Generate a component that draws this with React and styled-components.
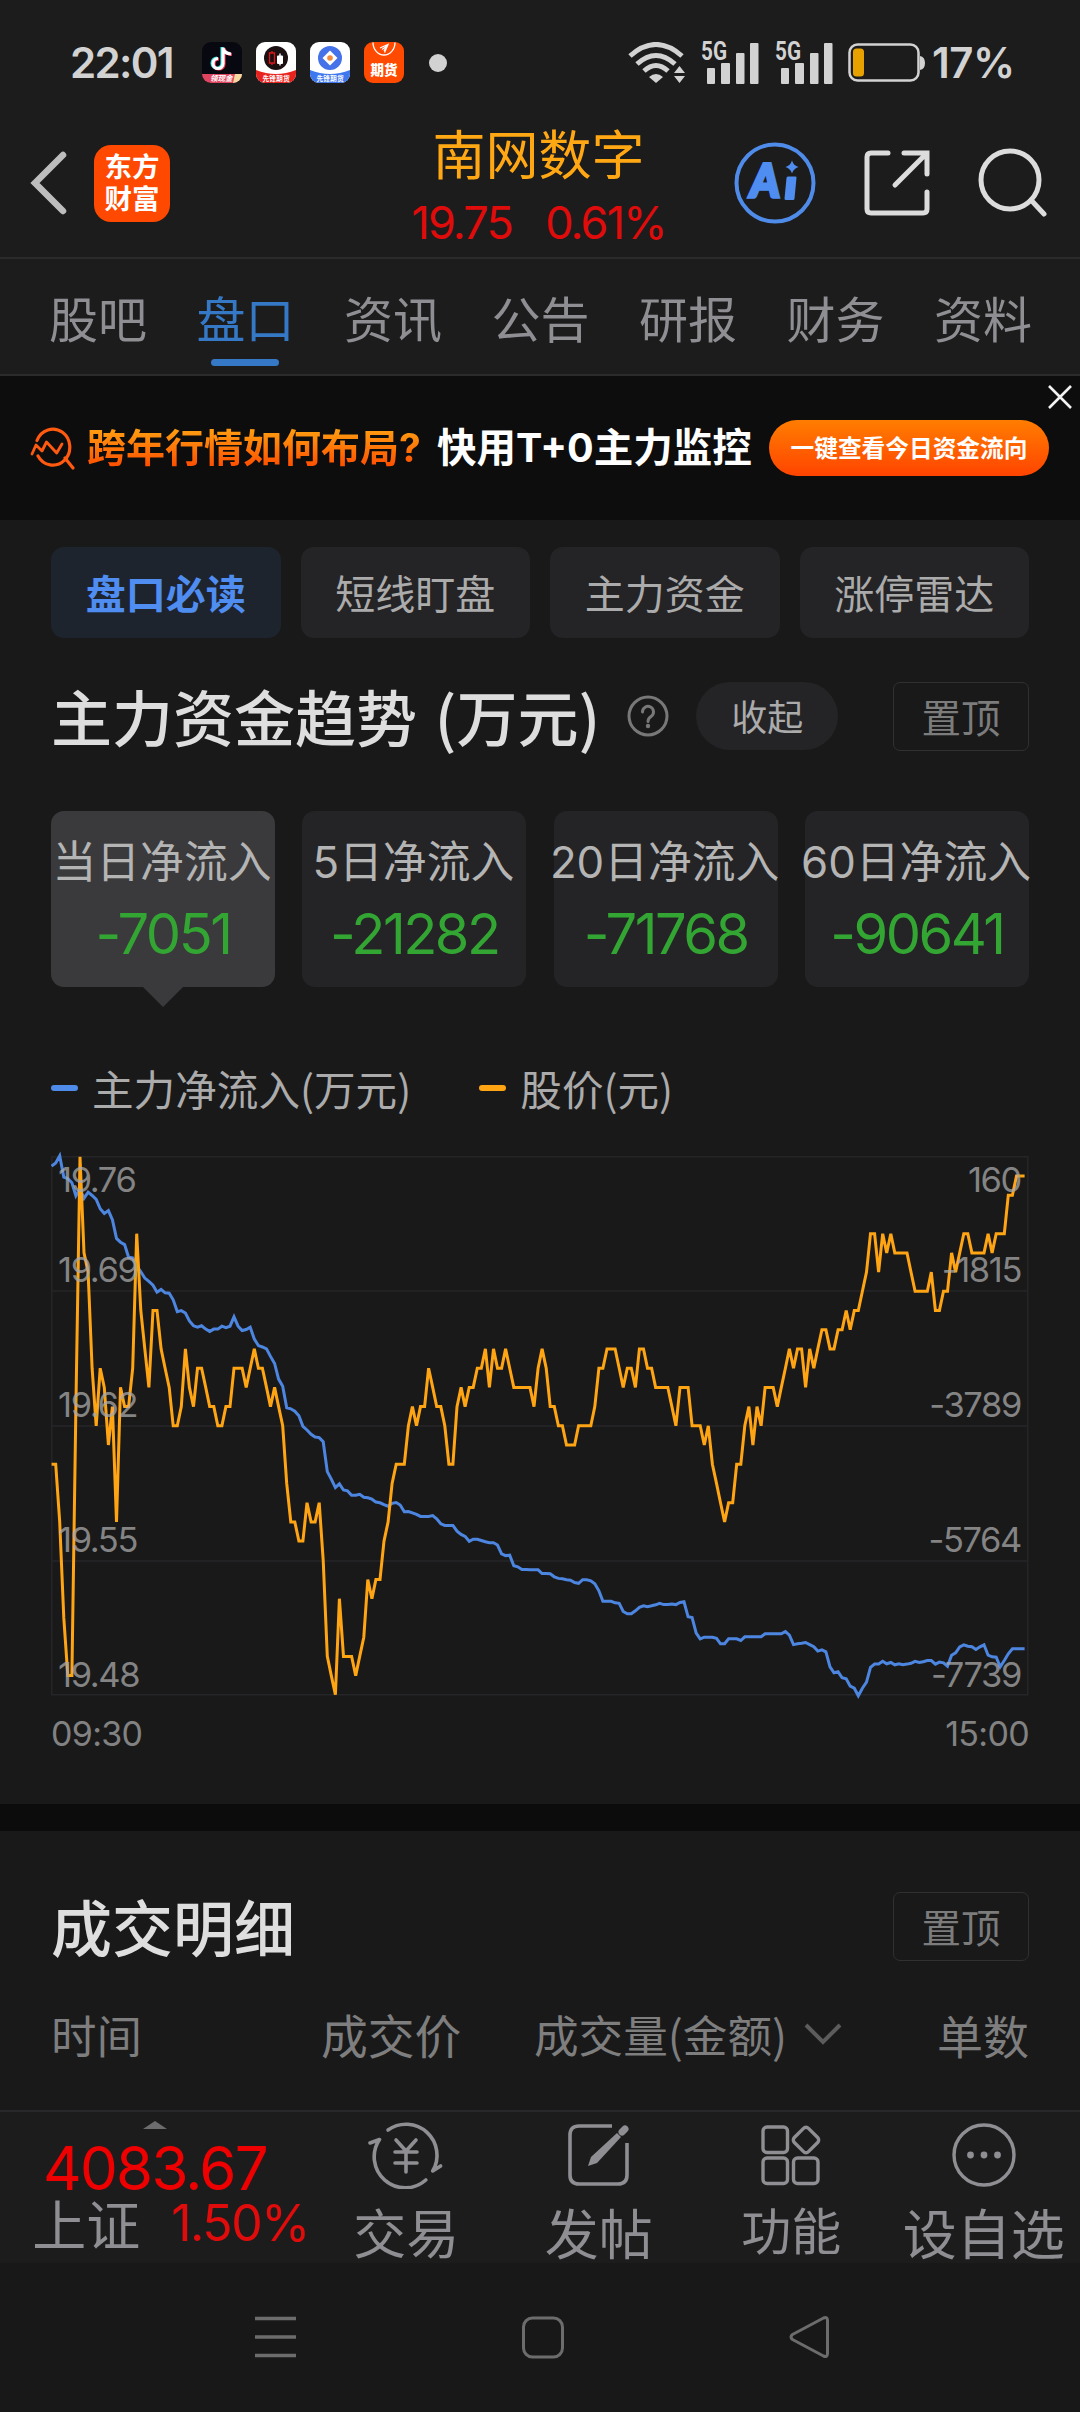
import React from 'react';
import styled, { createGlobalStyle } from 'styled-components';

const PRICE = [
  16, 16, 19, 24, 27, 27, 13, 0, 5, 6, 11, 14, 11, 12, 15, 13, 19, 12, 13, 13, 11, 4, 8, 10, 12, 8, 8, 10, 11, 12,
  14, 14, 13, 10, 12, 13, 11, 11, 12, 13, 13, 14, 14, 13, 13, 11, 11, 11, 12, 11, 10, 11, 11, 12, 13, 12, 13, 14, 17, 19,
  19, 20, 20, 18, 19, 19, 18, 21, 26, 27, 28, 23, 26, 26, 26, 27, 26, 25, 22, 23, 22, 22, 20, 19, 17, 16, 16, 16, 14, 13,
  14, 13, 13, 11, 12, 13, 13, 14, 16, 16, 13, 12, 13, 12, 12, 11, 11, 10, 12, 10, 11, 11, 10, 11, 12, 12, 12, 12, 12, 13,
  11, 10, 11, 13, 13, 14, 14, 15, 15, 15, 14, 14, 14, 14, 13, 11, 11, 10, 10, 10, 11, 12, 11, 11, 12, 10, 10, 11, 11, 12,
  12, 12, 12, 13, 14, 12, 12, 12, 14, 14, 14, 15, 14, 16, 17, 18, 19, 18, 18, 16, 16, 14, 13, 15, 13, 14, 12, 12, 12, 13,
  12, 11, 10, 11, 10, 10, 12, 10, 11, 10, 9, 9, 10, 10, 9, 9, 8, 9, 8, 8, 7, 6, 4, 4, 6, 4, 5, 4, 5, 5,
  5, 5, 6, 7, 7, 7, 7, 6, 8, 8, 7, 7, 5, 6, 5, 4, 4, 5, 5, 5, 5, 4, 5, 4, 4, 4, 2, 2, 1, 1,
  1,
];

const FLOW = [
  9.4, 6.1, -1, 20.3, 21.7, 26, 39, 32, 41.5, 35.4, 38.7, 42.5, 52, 56.6, 53.8, 62.8, 81.6, 85.4, 87.8, 100.5,
  101, 109, 115, 121.3, 124.6, 128.4, 135.4, 132.6, 136, 136.4, 143, 154.8, 153.8, 156.2, 164.2, 169, 170.4, 169, 172.3, 174.6,
  172.3, 172.3, 169.4, 170.8, 169.4, 160, 169.4, 173.7, 172.7, 170.4, 182.2, 188.8, 190.2, 192, 199.6, 206.7, 222.3, 229.4, 251, 252,
  254.4, 259, 269.5, 273.2, 277.5, 280.3, 280.8, 285, 314.8, 322.3, 330.8, 327, 333.2, 334.1, 338.4, 338.4, 337.5, 340.4, 341, 342.4,
  345.3, 346, 347.8, 349.4, 346.5, 345.7, 348.2, 355, 354.7, 356, 357.6, 359.6, 359.6, 359.6, 358.8, 362, 367, 368.6, 368.6, 368.6,
  374.3, 377.6, 379.6, 384.5, 382.4, 382.4, 383.7, 385, 386, 386, 388.2, 397, 398.8, 398.4, 409, 410, 412.6, 412.6, 413, 413,
  413, 416.7, 416.7, 417, 420, 421.6, 422, 423, 423.4, 425.7, 426.5, 422.9, 422.9, 424, 427, 434, 444.5, 444.5, 444.5, 446,
  446.5, 454.7, 457, 457, 454, 450.6, 449, 449.8, 449, 448, 446.5, 447.8, 447.8, 447.3, 447.8, 445.7, 445, 460, 460.8, 476.3,
  482, 480.4, 480.4, 480.4, 481.6, 487, 487, 482, 482, 482, 483.7, 480, 480, 480, 480, 480, 477, 477, 477, 477,
  477, 474.7, 478.4, 487.8, 487, 486.5, 485.7, 487.8, 490, 494.3, 493, 495, 510, 516, 515, 521, 522, 529.4, 531.4, 539,
  531.4, 525.3, 510.6, 507.3, 507.3, 504.5, 507, 505.7, 508, 507, 508, 507.3, 506.5, 504.5, 505.7, 505, 503.7, 503.7, 507.3, 505.3,
  506, 509.4, 498.4, 496, 490, 488, 489.4, 490, 492.7, 490, 488, 498.4, 500, 500.4, 510, 503.7, 497, 492, 492, 492,
  492,
];

const CHART_HEIGHT = 538;
const STEP_X = 4.054;
const STEP_Y = CHART_HEIGHT / 28;

const toPoints = (values, scale) =>
  values.map((v, i) => `${(0.6 + i * STEP_X).toFixed(1)},${(5.8 + v * scale).toFixed(1)}`).join(' ');

const tabs = ['股吧', '盘口', '资讯', '公告', '研报', '财务', '资料'];
const pills = ['盘口必读', '短线盯盘', '主力资金', '涨停雷达'];
const flows = [
  { label: '当日净流入', value: '-7051' },
  { label: '5日净流入', value: '-21282' },
  { label: '20日净流入', value: '-71768' },
  { label: '60日净流入', value: '-90641' },
];
const axis = [
  { y: 41, left: '19.76', right: '160' },
  { y: 131, left: '19.69', right: '-1815' },
  { y: 266, left: '19.62', right: '-3789' },
  { y: 401, left: '19.55', right: '-5764' },
  { y: 536, left: '19.48', right: '-7739' },
];

const WifiIcon = () => (
  <svg width="58" height="42" viewBox="0 0 58 42" fill="none" stroke="#d2d2d2" strokeWidth="5">
    <path d="M2 14Q28 -9 54 14" />
    <path d="M9 22Q28 5 47 22" />
    <path d="M16 29Q28 18 40 29" />
    <path d="M21 35Q28 29 35 35L28 41Z" fill="#d2d2d2" stroke="none" />
    <path d="M46 31L51.500 24L57 31ZM46 34H57L51.500 41Z" fill="#d2d2d2" stroke="none" />
  </svg>
);

const SignalIcon = () => (
  <svg width="60" height="60" viewBox="0 -8 60 60" fill="#d2d2d2">
    <text x="1" y="18.500" fontFamily="Roboto, sans-serif" fontWeight="700" fontSize="25" textLength="26" lengthAdjust="spacingAndGlyphs">5G</text>
    <rect x="7" y="27" width="8" height="16" rx="1" />
    <rect x="21" y="22" width="9" height="21" rx="1" />
    <rect x="36" y="12" width="8.500" height="31" rx="1" />
    <rect x="50" y="2" width="8.500" height="41" rx="1" />
  </svg>
);

const BatteryIcon = () => (
  <svg width="78" height="40" viewBox="0 0 78 40" fill="none">
    <rect x="1.500" y="1.500" width="69" height="36" rx="8" stroke="#d2d2d2" strokeWidth="2.500" />
    <path d="M72 13q5 1 5 7t-5 7z" fill="#d2d2d2" />
    <rect x="5" y="5.500" width="11" height="28" rx="3.500" fill="#e8a200" />
  </svg>
);

const TiktokAppIcon = () => (
  <svg width="40" height="41" viewBox="0 0 40 41">
    <defs>
      <clipPath id="appA"><rect width="40" height="41" rx="9" /></clipPath>
    </defs>
    <g clipPath="url(#appA)">
      <rect width="40" height="41" fill="#080810" />
      <g fill="none" strokeWidth="3.200">
        <path d="M20 5V21a5 5 0 1 1-5-5M20 6q1.500 5 8 5.500" stroke="#25d8d8" />
        <path d="M22 6V22a5 5 0 1 1-5-5M22 7q1.500 5 8 5.500" stroke="#f03050" />
        <path d="M21 5.500V21.500a5 5 0 1 1-5-5M21 6.500q1.500 5 8 5.500" stroke="#fff" />
      </g>
      <path d="M0 32H40V41H0Z" fill="#e04560" />
      <path d="M33 32h7v9h-9z" fill="#f3d9a0" />
      <text x="8" y="39" fontSize="7.500" fontWeight="700" fontStyle="italic" fill="#fff" fontFamily="Noto Sans CJK SC, sans-serif">领现金</text>
    </g>
  </svg>
);

const FuturesAppIcon = ({ blue }) => (
  <svg width="40" height="41" viewBox="0 0 40 41">
    <defs>
      <clipPath id={blue ? 'appC' : 'appB'}><rect width="40" height="41" rx="9" /></clipPath>
    </defs>
    <g clipPath={`url(#${blue ? 'appC' : 'appB'})`}>
      <rect width="40" height="41" fill="#fff" />
      <path d="M0 28Q20 36 40 28V41H0Z" fill={blue ? '#3f78ee' : '#e8231e'} />
      <circle cx="20" cy="16" r="12" fill={blue ? '#4572e8' : '#1a1012'} />
      {blue ? (
        <>
          <path d="M20 8.500L27.500 16L20 23.500L12.500 16Z" fill="#fff" />
          <circle cx="20" cy="16" r="2.800" fill="#f08a3c" />
        </>
      ) : (
        <>
          <path d="M16 9v2M16 21v2M13.500 11h5v10h-5z" fill="none" stroke="#d81818" strokeWidth="1.400" />
          <path d="M24 11.500v12" stroke="#fff" strokeWidth="1.400" />
          <rect x="21" y="13.500" width="6" height="8.500" rx="1" fill="#fff" />
        </>
      )}
      <text x="6.500" y="39" fontSize="6.800" fontWeight="700" fill="#fff" fontFamily="Noto Sans CJK SC, sans-serif">先锋期货</text>
    </g>
  </svg>
);

const EastAppIcon = () => (
  <svg width="40" height="41" viewBox="0 0 40 41">
    <rect width="40" height="41" rx="9" fill="#ff4a00" />
    <path d="M9 0.500a11 12.500 0 0 0 22 0" fill="none" stroke="#fff" strokeWidth="1.300" />
    <path d="M16 6l8-3.500-3.500 8M18 7.500l5-3.500M20 9l3-5" fill="none" stroke="#fff" strokeWidth="1.300" />
    <text x="6.500" y="32.500" fontSize="13.500" fontWeight="900" fill="#fff" fontFamily="Noto Sans CJK SC, sans-serif">期货</text>
  </svg>
);

const BackIcon = () => (
  <svg width="38" height="66" viewBox="0 0 38 66" fill="none" stroke="#bdbdbd" strokeWidth="6.500" strokeLinecap="round">
    <path d="M33 5L5 33L33 61" />
  </svg>
);

const AiIcon = () => (
  <svg width="84" height="84" viewBox="0 0 84 84">
    <circle cx="42" cy="42" r="38.500" fill="none" stroke="#4f8be8" strokeWidth="4" />
    <text x="17" y="56.500" fontSize="46" fontWeight="900" fill="#4f8df0" stroke="#4f8df0" strokeWidth="3.500" fontFamily="Lato, sans-serif" textLength="29" lengthAdjust="spacingAndGlyphs" transform="skewX(-6) translate(5 0)">A</text>
    <path d="M55 35.500h7.500q1 0 1 1L61.500 57.500q0 1.500-1.500 1.500h-7q-1.500 0-1.500-1.500L53.500 37q0-1.500 1.500-1.500Z" fill="#4f8df0" />
    <path d="M59 19.500Q60.500 24.500 65.500 26Q60.500 27.500 59 32.500Q57.500 27.500 52.500 26Q57.500 24.500 59 19.500Z" fill="#4f8df0" />
  </svg>
);

const ShareIcon = () => (
  <svg width="68" height="70" viewBox="0 0 68 70" fill="none" stroke="#dcdcdc" strokeWidth="5" strokeLinecap="round">
    <path d="M25 5H8Q4 5 4 9V61Q4 65 8 65H60Q64 65 64 61V44" />
    <path d="M41 5H64V26M62 7L32 37" />
  </svg>
);

const SearchIcon = () => (
  <svg width="70" height="72" viewBox="0 0 70 72" fill="none" stroke="#dcdcdc" strokeWidth="5" strokeLinecap="round">
    <circle cx="33" cy="33" r="29" />
    <path d="M54 53L67 67" />
  </svg>
);

const TrendIcon = () => (
  <svg width="46" height="46" viewBox="0 0 46 46" fill="none" stroke="#ff5a10" strokeWidth="3.200" strokeLinecap="round" strokeLinejoin="round">
    <path d="M8 15.500A17 18 0 1 1 9 31M36 33L44 43" />
    <path d="M3 29L7 20L13 26L17.500 17L27.700 28L33 19" strokeWidth="2.800" />
  </svg>
);

const CloseIcon = () => (
  <svg width="26" height="26" viewBox="0 0 26 26" stroke="#f2f2f2" strokeWidth="2.600">
    <path d="M2 2L24 24M24 2L2 24" />
  </svg>
);

const HelpIcon = () => (
  <svg width="42" height="42" viewBox="0 0 42 42" fill="none" stroke="#787878" strokeWidth="3">
    <circle cx="21" cy="21" r="19" />
    <path d="M15.500 17a5.500 5.500 0 1 1 8.500 4.500q-3 2-3 5" strokeLinecap="round" />
    <circle cx="21" cy="31" r="2.200" fill="#787878" stroke="none" />
  </svg>
);

const TradeIcon = () => (
  <svg width="76" height="68" viewBox="0 0 76 68" fill="none" stroke="#8e8e93" strokeWidth="3.600" strokeLinecap="round" strokeLinejoin="round">
    <path d="M20 9A31 31 0 0 1 64.700 50L72.600 45" />
    <path d="M57.800 59A31 31 0 0 1 11.500 18.500L2 22" />
    <path d="M28 19L38 30L48 19M38 30V51M27 31H49M27 42H49" />
  </svg>
);

const PostIcon = () => (
  <svg width="64" height="64" viewBox="0 0 64 64" fill="none" stroke="#8e8e93" strokeWidth="3.600">
    <path d="M45 3H12Q3 3 3 12V52Q3 61 12 61H51Q60 61 60 52V20" />
    <path d="M50 10L54 14L30 40L21 43L24 34Z" fill="#8e8e93" stroke="none" />
    <path d="M55 9L58 6" strokeWidth="7" strokeLinecap="round" />
  </svg>
);

const GridIcon = () => (
  <svg width="62" height="62" viewBox="0 0 62 62" fill="none" stroke="#8e8e93" strokeWidth="3.400">
    <rect x="3" y="3" width="24.500" height="25.500" rx="4" />
    <rect x="3" y="34" width="24.500" height="25.500" rx="4" />
    <rect x="33.500" y="34" width="24.500" height="25.500" rx="4" />
    <rect x="36" y="6" width="20" height="20" rx="3.500" transform="rotate(45 46 16)" />
  </svg>
);

const MoreIcon = () => (
  <svg width="66" height="66" viewBox="0 0 66 66" fill="none" stroke="#8e8e93" strokeWidth="3.400">
    <circle cx="33" cy="33" r="30" />
    <g fill="#8e8e93" stroke="none">
      <circle cx="19.500" cy="33" r="3.400" />
      <circle cx="33" cy="33" r="3.400" />
      <circle cx="46.500" cy="33" r="3.400" />
    </g>
  </svg>
);

const actions = [
  { label: '交易', icon: <TradeIcon />, size: 53, line: 67 },
  { label: '发帖', icon: <PostIcon />, size: 54, line: 67 },
  { label: '功能', icon: <GridIcon />, size: 50, line: 60 },
  { label: '设自选', icon: <MoreIcon />, size: 54, line: 67 },
];

const TrendChart = () => (
  <ChartSvg width="978" height="550" viewBox="0 0 978 550">
    <g fill="none" stroke="#262628" strokeWidth="1.500">
      <rect x="0.800" y="5.800" width="976" height="538" />
      <path d="M0 140H977M0 275H977M0 410H977" />
    </g>
    <polyline points={toPoints(FLOW, 1)} fill="none" stroke="#4d86e0" strokeWidth="3" />
    <polyline points={toPoints(PRICE, STEP_Y)} fill="none" stroke="#ffa514" strokeWidth="3" />
    {axis.map((row) => (
      <React.Fragment key={row.left}>
        <AxisText x="7" y={row.y}>{row.left}</AxisText>
        <AxisText x="970" y={row.y} textAnchor="end">{row.right}</AxisText>
      </React.Fragment>
    ))}
  </ChartSvg>
);

const App = () => (
  <Screen>
    <GlobalStyle />
    <StatusBar>
      <StatusText>22:01</StatusText>
      <AppIcons>
        <TiktokAppIcon />
        <FuturesAppIcon />
        <FuturesAppIcon blue />
        <EastAppIcon />
      </AppIcons>
      <Dot />
      <StatusRight>
        <WifiIcon />
        <SignalIcon />
        <SignalIcon />
        <BatteryIcon />
        <StatusText>17%</StatusText>
      </StatusRight>
    </StatusBar>

    <Header>
      <HeaderSide>
        <BackIcon />
        <Logo><span>东方</span><span>财富</span></Logo>
      </HeaderSide>
      <StockTitle>
        <StockName>南网数字</StockName>
        <StockQuote><span>19.75</span><span>0.61%</span></StockQuote>
      </StockTitle>
      <HeaderTools>
        <AiIcon />
        <ShareIcon />
        <SearchIcon />
      </HeaderTools>
    </Header>

    <Tabs>
      {tabs.map((tab) => <Tab key={tab} $active={tab === '盘口'}>{tab}</Tab>)}
    </Tabs>

    <Banner>
      <TrendIcon />
      <BannerQuestion>跨年行情如何布局?</BannerQuestion>
      <BannerText>快用T+0主力监控</BannerText>
      <BannerButton>一键查看今日资金流向</BannerButton>
      <BannerClose><CloseIcon /></BannerClose>
    </Banner>

    <FlowSection>
      <Pills>
        {pills.map((pill, i) => <Pill key={pill} $active={i === 0}>{pill}</Pill>)}
      </Pills>
      <TitleRow>
        <Title>主力资金趋势 (万元)</Title>
        <HelpIcon />
        <Collapse>收起</Collapse>
        <PinButton>置顶</PinButton>
      </TitleRow>
      <Cards>
        {flows.map((item, i) => (
          <Card key={item.label} $active={i === 0}>
            <CardLabel>{item.label}</CardLabel>
            <CardValue>{item.value}</CardValue>
          </Card>
        ))}
      </Cards>
      <Legend>
        <LegendItem $color="#4f8be8">主力净流入(万元)</LegendItem>
        <LegendItem $color="#ffa514">股价(元)</LegendItem>
      </Legend>
      <TrendChart />
      <TimeAxis><span>09:30</span><span>15:00</span></TimeAxis>
    </FlowSection>

    <DetailSection>
      <TitleRow>
        <Title>成交明细</Title>
        <PinButton>置顶</PinButton>
      </TitleRow>
      <TableHead>
        <HeadCell $size={45.5}>时间</HeadCell>
        <HeadCell $size={46.8}>成交价</HeadCell>
        <HeadCell $size={44.6}>
          成交量(金额)
          <svg width="38" height="24" viewBox="0 0 38 24" fill="none" stroke="#5c5c5c" strokeWidth="4">
            <path d="M2 3L19 20L36 3" />
          </svg>
        </HeadCell>
        <HeadCell $size={46}>单数</HeadCell>
      </TableHead>
    </DetailSection>

    <BottomBar>
      <IndexBox>
        <Caret />
        <IndexValue>4083.67</IndexValue>
        <IndexRow><IndexName>上证</IndexName><IndexChange>1.50%</IndexChange></IndexRow>
      </IndexBox>
      {actions.map((action) => (
        <Action key={action.label}>
          <ActionIcon>{action.icon}</ActionIcon>
          <ActionLabel $size={action.size} $line={action.line}>{action.label}</ActionLabel>
        </Action>
      ))}
    </BottomBar>

    <SystemNav>
      <svg width="42" height="42" viewBox="0 0 42 42" stroke="#6c6c6c" strokeWidth="3.400">
        <path d="M0 2.500H41M0 21H41M0 39.500H41" />
      </svg>
      <svg width="44" height="44" viewBox="0 0 44 44" fill="none" stroke="#6c6c6c" strokeWidth="3">
        <rect x="2.500" y="2" width="39" height="39" rx="9" />
      </svg>
      <svg width="42" height="44" viewBox="0 0 42 44" fill="none" stroke="#6c6c6c" strokeWidth="3" strokeLinejoin="round">
        <path d="M34.500 2Q38.500 0.500 38.500 4.500V37.500Q38.500 41.500 34.500 40L3.500 23.500Q0.500 21 3.500 18.500Z" />
      </svg>
    </SystemNav>
  </Screen>
);

export default App;

const GlobalStyle = createGlobalStyle`
  * {
    box-sizing: border-box;
  }

  body {
    margin: 0;
    background: #19191a;
  }

  svg {
    display: block;
    flex: none;
  }
`;

const Screen = styled.div`
  display: flex;
  flex-direction: column;
  width: 1080px;
  height: 2412px;
  overflow: hidden;
  background: #19191a;
  font-family: 'Noto Sans CJK SC', sans-serif;
  white-space: nowrap;
`;

const StatusBar = styled.div`
  display: flex;
  align-items: center;
  height: 125px;
  padding: 0 66px 0 70px;
  background: #1c1c1c;
`;

const StatusText = styled.span`
  width: 102px;
  color: #d2d2d2;
  font: 600 42px/50px Inter, sans-serif;
  letter-spacing: -0.04em;
`;

const AppIcons = styled.div`
  display: flex;
  gap: 14px;
  margin-left: 30px;
`;

const Dot = styled.span`
  width: 18px;
  height: 18px;
  margin-left: 25px;
  border-radius: 50%;
  background: #d2d2d2;
`;

const StatusRight = styled.div`
  display: flex;
  align-items: center;
  gap: 14px;
  margin-left: auto;

  ${StatusText} {
    width: 82px;
    margin-left: -8px;
    letter-spacing: -0.01em;
  }
`;

const Header = styled.header`
  display: grid;
  grid-template-columns: 1fr auto 1fr;
  grid-template-rows: 116px;
  align-items: center;
  height: 134px;
  padding: 0 33px 0 30px;
  border-bottom: 2px solid #2b2b2c;
  background: #1c1c1c;
`;

const HeaderSide = styled.div`
  display: flex;
  align-items: center;
  gap: 26px;
`;

const Logo = styled.div`
  display: flex;
  flex-direction: column;
  align-items: center;
  gap: 1px;
  width: 76px;
  height: 77px;
  padding-top: 5px;
  border-radius: 17px;
  background: #ff4800;
  color: #fff;
  font-size: 27.500px;
  font-weight: 700;
  line-height: 31px;
`;

const StockTitle = styled.div`
  display: flex;
  flex-direction: column;
  align-items: center;
  padding-top: 8px;
`;

const StockName = styled.div`
  color: #ffa814;
  font-size: 53px;
  line-height: 60px;
`;

const StockQuote = styled.div`
  display: flex;
  gap: 33px;
  margin-top: 11px;
  color: #e00b0b;
  font: 400 45px/60px Inter, sans-serif;
  letter-spacing: -0.04em;
`;

const HeaderTools = styled.div`
  display: flex;
  align-items: center;
  justify-content: flex-end;
  gap: 46px;
`;

const Tabs = styled.nav`
  display: flex;
  justify-content: space-between;
  height: 117px;
  padding: 0 48px 0 49px;
  border-bottom: 2px solid #2b2b2c;
  background: #1c1c1c;
`;

const Tab = styled.div`
  display: flex;
  flex-direction: column;
  align-items: center;
  padding-top: 23px;
  color: ${({ $active }) => ($active ? '#3478c6' : '#8e8e93')};
  font-size: 49px;
  line-height: 70px;

  &::after {
    content: '';
    width: 68px;
    height: 7px;
    margin-top: 7px;
    border-radius: 4px;
    background: ${({ $active }) => ($active ? '#3478c6' : 'transparent')};
  }
`;

const Banner = styled.div`
  position: relative;
  display: flex;
  align-items: center;
  height: 144px;
  padding: 0 31px 0 29px;
  background: #0d0d0d;
`;

const BannerQuestion = styled.strong`
  width: 338px;
  margin-left: 12px;
  background: linear-gradient(#ff9a10 20%, #ff5200 80%);
  background-clip: text;
  color: transparent;
  font: 700 39px/56px Inter, 'Noto Sans CJK SC', sans-serif;
`;

const BannerText = styled.strong`
  margin-left: 12px;
  color: #fff;
  font: 700 39.500px/56px Inter, 'Noto Sans CJK SC', sans-serif;
`;

const BannerButton = styled.div`
  width: 280px;
  height: 56px;
  margin-left: auto;
  border-radius: 28px;
  background: linear-gradient(#ff7d00, #ff4400);
  color: #fff;
  font-size: 23.700px;
  font-weight: 700;
  line-height: 54px;
  text-align: center;
`;

const BannerClose = styled.div`
  position: absolute;
  top: 8px;
  right: 7px;
`;

const FlowSection = styled.section`
  height: 1284px;
  padding: 27px 51px 0;
`;

const Pills = styled.div`
  display: grid;
  grid-template-columns: repeat(4, 1fr);
  gap: 20px;
`;

const Pill = styled.div`
  height: 91px;
  border-radius: 13px;
  background: ${({ $active }) => ($active ? '#1e242d' : '#242426')};
  color: ${({ $active }) => ($active ? '#4f8df0' : '#ababab')};
  font-size: 40px;
  font-weight: ${({ $active }) => ($active ? 700 : 400)};
  line-height: 90px;
  text-align: center;
`;

const TitleRow = styled.div`
  display: flex;
  align-items: center;
  height: 68px;
  margin-top: 44px;
`;

const Title = styled.h2`
  margin: 0;
  color: #dedede;
  font-size: 61px;
  font-weight: 500;
  line-height: 66px;
  word-spacing: 4px;

  & + svg {
    margin-left: 27px;
  }
`;

const Collapse = styled.div`
  width: 142px;
  height: 68px;
  margin-left: 27px;
  border-radius: 34px;
  background: #242426;
  color: #ababab;
  font-size: 36px;
  line-height: 66px;
  text-align: center;
`;

const PinButton = styled.div`
  width: 136px;
  height: 69px;
  margin-left: auto;
  border: 1.500px solid #303032;
  border-radius: 7px;
  color: #7c7c7c;
  font-size: 39.500px;
  line-height: 66px;
  text-align: center;
`;

const Cards = styled.div`
  display: grid;
  grid-template-columns: repeat(4, 224px);
  justify-content: space-between;
  margin-top: 61px;
`;

const Card = styled.div`
  position: relative;
  display: flex;
  flex-direction: column;
  align-items: center;
  height: 176px;
  padding-top: 21px;
  border-radius: 13px;
  background: ${({ $active }) => ($active ? '#3a3a3c' : '#242426')};

  &::after {
    content: '';
    position: absolute;
    top: 100%;
    border: 20px solid transparent;
    border-bottom-width: 0;
    border-top-color: ${({ $active }) => ($active ? '#3a3a3c' : 'transparent')};
  }
`;

const CardLabel = styled.div`
  margin-left: -2px;
  color: #b4b4b4;
  font: 400 43.800px/62px Inter, 'Noto Sans CJK SC', sans-serif;
`;

const CardValue = styled.div`
  margin-top: 9px;
  color: #33a533;
  font: 400 56px/62px Inter, sans-serif;
  letter-spacing: -0.045em;
`;

const Legend = styled.div`
  display: flex;
  gap: 68px;
  height: 60px;
  margin-top: 71px;
`;

const LegendItem = styled.div`
  display: flex;
  align-items: center;
  gap: 14px;
  color: #ababab;
  font-size: 41.600px;
  line-height: 60px;

  &::before {
    content: '';
    width: 27px;
    height: 6px;
    border-radius: 3px;
    background: ${({ $color }) => $color};
  }
`;

const ChartSvg = styled.svg`
  margin-top: 33px;
`;

const AxisText = styled.text`
  fill: #a8a8a8;
  fill-opacity: 0.75;
  font: 400 34.500px Inter, sans-serif;
  letter-spacing: -0.04em;
`;

const TimeAxis = styled.div`
  display: flex;
  justify-content: space-between;
  margin-top: 12px;
  color: #828282;
  font: 400 34px/42px Inter, sans-serif;
  letter-spacing: -0.02em;
`;

const DetailSection = styled.section`
  height: 306px;
  padding: 17px 51px 0;
  border-top: 27px solid #0c0c0c;
`;

const TableHead = styled.div`
  display: grid;
  grid-template-columns: 270px 213px 1fr auto;
  margin-top: 42px;
`;

const HeadCell = styled.div`
  display: flex;
  align-items: center;
  gap: 17px;
  color: #7e7e7e;
  font-size: ${({ $size }) => $size}px;
  line-height: 64px;
`;

const BottomBar = styled.footer`
  display: grid;
  grid-template-columns: 310px repeat(4, 192.500px);
  height: 153px;
  border-top: 2px solid #28282a;
  background: #1c1c1c;
`;

const IndexBox = styled.div`
  display: flex;
  flex-direction: column;
  align-items: center;
  padding-top: 9px;
`;

const Caret = styled.span`
  border: 12px solid transparent;
  border-top-width: 0;
  border-bottom: 8px solid #6c6c6f;
`;

const IndexValue = styled.div`
  margin-top: 9px;
  color: #ee0000;
  font: 400 60px/60px Inter, sans-serif;
  letter-spacing: -0.03em;
`;

const IndexRow = styled.div`
  display: flex;
  align-items: center;
  gap: 31px;
  height: 50px;
  margin-left: 31px;
`;

const IndexName = styled.span`
  color: #8e8e93;
  font-size: 54px;
  line-height: 50px;
`;

const IndexChange = styled.span`
  color: #e00b0b;
  font: 400 50px/54px Inter, sans-serif;
  letter-spacing: -0.03em;
`;

const Action = styled.div`
  display: flex;
  flex-direction: column;
  align-items: center;
`;

const ActionIcon = styled.div`
  display: flex;
  align-items: center;
  height: 86px;
`;

const ActionLabel = styled.div`
  color: #8e8e93;
  font-size: ${({ $size }) => $size}px;
  line-height: ${({ $line }) => $line}px;
`;

const SystemNav = styled.div`
  display: flex;
  justify-content: space-between;
  flex: 1;
  padding: 53px 249px 0 255px;
  background: #181818;
`;
